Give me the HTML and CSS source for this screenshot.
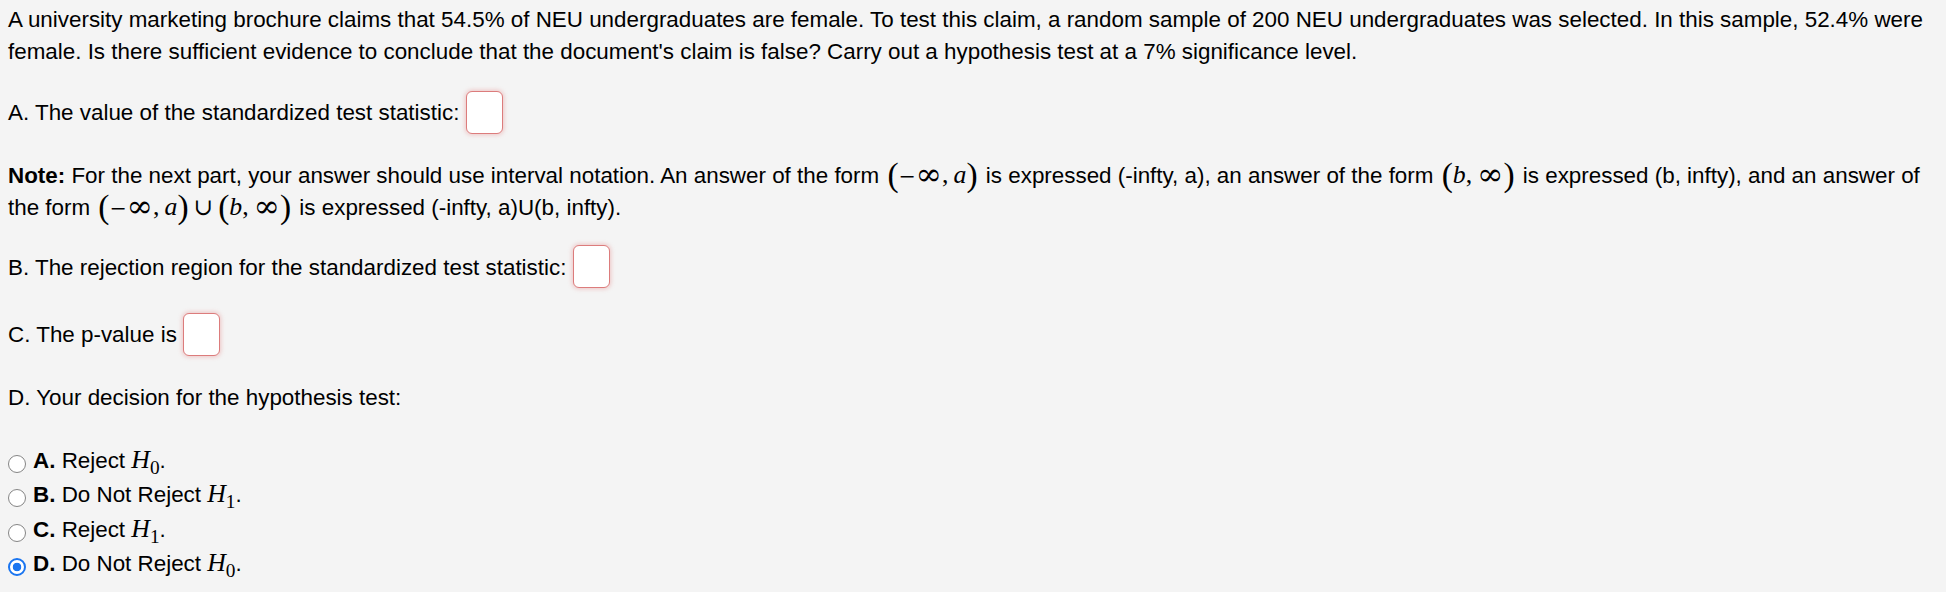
FILE: index.html
```html
<!DOCTYPE html>
<html lang="en">
<head>
<meta charset="utf-8">
<title>Hypothesis test</title>
<link rel="stylesheet" href="styles.css">
</head>
<body>
<div class="problem">
  <p class="stmt">A university marketing brochure claims that 54.5% of NEU undergraduates are female. To test this claim, a random sample of 200 NEU undergraduates was selected. In this sample, 52.4% were female. Is there sufficient evidence to conclude that the document's claim is false? Carry out a hypothesis test at a 7% significance level.</p>

  <p class="part part-a">A. The value of the standardized test statistic: <input class="answer" type="text" aria-label="test statistic"></p>

  <p class="note"><b>Note:</b> For the next part, your answer should use interval notation. An answer of the form <span class="math"><span class="paren">(</span><span class="minus">−</span><span class="inf">∞</span>,&#8201;<i>a</i><span class="paren">)</span></span> is expressed (-infty, a), an answer of the form <span class="math"><span class="paren">(</span><i>b</i>,&#8201;<span class="inf">∞</span><span class="paren">)</span></span> is expressed (b, infty), and an answer of the form <span class="math"><span class="paren">(</span><span class="minus">−</span><span class="inf">∞</span>,&#8201;<i>a</i><span class="paren">)</span><span class="op">∪</span><span class="paren">(</span><i>b</i>,&#8201;<span class="inf">∞</span><span class="paren">)</span></span> is expressed (-infty, a)U(b, infty).</p>

  <p class="part part-b">B. The rejection region for the standardized test statistic: <input class="answer" type="text" aria-label="rejection region"></p>

  <p class="part part-c">C. The p-value is <input class="answer" type="text" aria-label="p-value"></p>

  <p class="part part-d">D. Your decision for the hypothesis test:</p>

  <div class="choices">
    <label class="choice"><input type="radio" name="decision"><span class="choice-text"><b>A.</b> Reject <span class="math"><i>H</i><sub>0</sub></span>.</span></label>
    <label class="choice"><input type="radio" name="decision"><span class="choice-text"><b>B.</b> Do Not Reject <span class="math"><i>H</i><sub>1</sub></span>.</span></label>
    <label class="choice"><input type="radio" name="decision"><span class="choice-text"><b>C.</b> Reject <span class="math"><i>H</i><sub>1</sub></span>.</span></label>
    <label class="choice"><input type="radio" name="decision" checked><span class="choice-text"><b>D.</b> Do Not Reject <span class="math"><i>H</i><sub>0</sub></span>.</span></label>
  </div>
</div>
</body>
</html>
```

FILE: styles.css
```css
html, body {
  margin: 0;
  padding: 0;
  background: #f4f4f4;
}

body {
  color: #000;
  font-family: "Liberation Sans", Arial, Helvetica, sans-serif;
  font-size: 22.4px;
  line-height: 32px;
}

.problem {
  padding: 4px 8px 0 8px;
}

p {
  margin: 0;
}

.part-a { margin-top: 29px; }
.note   { margin-top: 30px; }
.part-b { margin-top: 28px; }
.part-c { margin-top: 35px; }
.part-d { margin-top: 30px; }

.answer {
  box-sizing: border-box;
  width: 37px;
  height: 43px;
  margin: -8px 0 -4px 0;
  padding: 0 4px;
  vertical-align: middle;
  background: #fff;
  border: 1px solid #dc7c7c;
  border-radius: 6px;
  box-shadow: 0 0 4px 1px rgba(225, 110, 110, 0.35);
  font: inherit;
  outline: none;
}

.math {
  font-family: "Liberation Serif", "DejaVu Serif", serif;
  font-size: 1.15em;
  line-height: 0;
  white-space: nowrap;
}

.note .math {
  margin: 0 2px;
}

.math i {
  font-style: italic;
}

.minus {
  font-family: "DejaVu Serif", serif;
  font-size: 0.8em;
}

.inf {
  font-family: "DejaVu Serif", serif;
  font-size: 1.22em;
  vertical-align: -0.05em;
}

.paren {
  font-size: 1.3em;
  vertical-align: -0.1em;
}

.op {
  font-family: "DejaVu Serif", serif;
  font-size: 0.9em;
  padding: 0 0.22em;
}

.math sub {
  font-size: 0.75em;
  vertical-align: -0.3em;
  line-height: 0;
  font-style: normal;
}

.choices {
  margin-top: 30px;
}

.choice {
  display: flex;
  align-items: flex-start;
  line-height: 34.5px;
  height: 34.5px;
}

.choice input {
  appearance: none;
  -webkit-appearance: none;
  box-sizing: border-box;
  flex: none;
  width: 18px;
  height: 18px;
  margin: 11px 7px 0 0;
  background: #fff;
  border: 1px solid #858585;
  border-radius: 50%;
}

.choice input:checked {
  border: 2px solid #1a75f0;
  background: radial-gradient(circle, #1a75f0 0 4px, #fff 4.6px);
}

.choice-text b {
  font-weight: bold;
}
```
